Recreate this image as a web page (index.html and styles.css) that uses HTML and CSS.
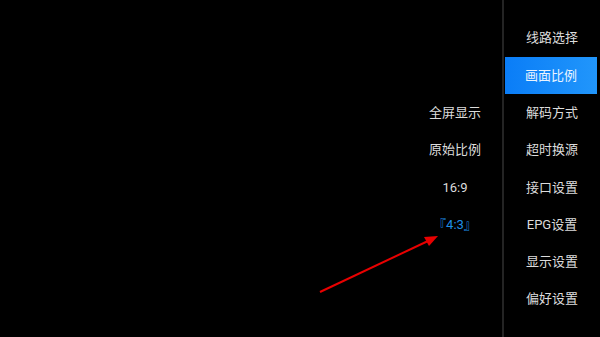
FILE: index.html
```html
<!DOCTYPE html>
<html>
<head>
  <title>画面比例</title>
  <link rel="stylesheet" href="styles.css">
</head>
<body>
  <div class="screen">
    <div class="content">
      <ul class="options">
        <li>全屏显示</li>
        <li>原始比例</li>
        <li>16:9</li>
        <li class="current">『4:3』</li>
      </ul>
    </div>
    <div class="divider"></div>
    <ul class="menu">
      <li>线路选择</li>
      <li class="active">画面比例</li>
      <li>解码方式</li>
      <li>超时换源</li>
      <li>接口设置</li>
      <li>EPG设置</li>
      <li>显示设置</li>
      <li>偏好设置</li>
    </ul>
    <svg class="arrow" width="600" height="337" viewBox="0 0 600 337">
      <line x1="320" y1="292" x2="428" y2="241" stroke="#e80000" stroke-width="2"/>
      <polygon points="438,236 424,237 429,246" fill="#e80000"/>
    </svg>
  </div>
</body>
</html>
```

FILE: styles.css
```css
body { margin: 0; background: #000; font-family: Roboto, "Noto Sans CJK SC", sans-serif; }
.screen { position: relative; display: flex; width: 600px; height: 337px; background: #000; overflow: hidden; }
.content { flex: 1; display: flex; justify-content: flex-end; }
ul { list-style: none; margin: 0; padding: 0; }
li { height: 37.3px; line-height: 37.3px; text-align: center; font-size: 13px; color: #dcdcdc; }
.options { width: 94px; padding-top: 94px; }
.options .current { color: #1e8fe6; }
.divider { width: 2px; background: #242424; }
.menu { width: 96px; padding-top: 19.4px; }
.menu .active { margin: 0 3px 0 1px; color: #eaf4ff; background: linear-gradient(to right, #0a7df7, #2196fb); }
.arrow { position: absolute; left: 0; top: 0; }
```
